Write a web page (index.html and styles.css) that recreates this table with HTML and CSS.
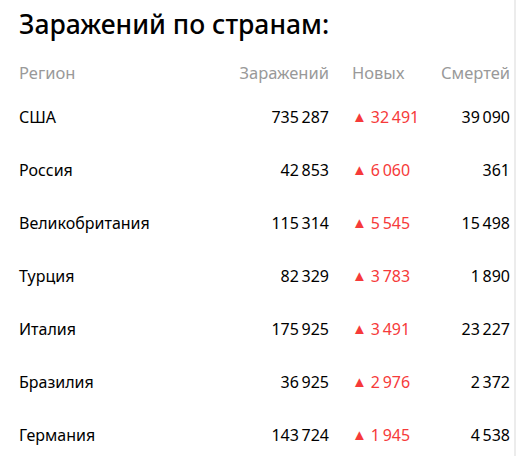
FILE: index.html
```html
<!DOCTYPE html>
<html lang="ru">
<head>
    <meta charset="UTF-8">
    <title>Заражений по странам</title>
    <link rel="stylesheet" href="styles.css">
</head>
<body>
    <div class="panel">
        <h1>Заражений по странам:</h1>
        <div class="table">
            <div class="row head">
                <div>Регион</div>
                <div class="num">Заражений</div>
                <div class="new">Новых</div>
                <div class="num">Смертей</div>
            </div>
            <div class="row">
                <div>США</div>
                <div class="num">735&#8201;287</div>
                <div class="new"><span class="up">&#9650;</span>32&#8201;491</div>
                <div class="num">39&#8201;090</div>
            </div>
            <div class="row">
                <div>Россия</div>
                <div class="num">42&#8201;853</div>
                <div class="new"><span class="up">&#9650;</span>6&#8201;060</div>
                <div class="num">361</div>
            </div>
            <div class="row">
                <div>Великобритания</div>
                <div class="num">115&#8201;314</div>
                <div class="new"><span class="up">&#9650;</span>5&#8201;545</div>
                <div class="num">15&#8201;498</div>
            </div>
            <div class="row">
                <div>Турция</div>
                <div class="num">82&#8201;329</div>
                <div class="new"><span class="up">&#9650;</span>3&#8201;783</div>
                <div class="num">1&#8201;890</div>
            </div>
            <div class="row">
                <div>Италия</div>
                <div class="num">175&#8201;925</div>
                <div class="new"><span class="up">&#9650;</span>3&#8201;491</div>
                <div class="num">23&#8201;227</div>
            </div>
            <div class="row">
                <div>Бразилия</div>
                <div class="num">36&#8201;925</div>
                <div class="new"><span class="up">&#9650;</span>2&#8201;976</div>
                <div class="num">2&#8201;372</div>
            </div>
            <div class="row">
                <div>Германия</div>
                <div class="num">143&#8201;724</div>
                <div class="new"><span class="up">&#9650;</span>1&#8201;945</div>
                <div class="num">4&#8201;538</div>
            </div>
        </div>
    </div>
</body>
</html>
```

FILE: styles.css
```css
body {
    margin: 0;
    background: #fff;
    font-family: "Noto Sans", Arial, sans-serif;
    color: #000;
}
.panel {
    width: 516px;
    height: 456px;
    border-right: 2px solid #ececec;
    padding: 0 4px 0 19px;
    box-sizing: border-box;
    overflow: hidden;
}
h1 {
    margin: 0;
    padding-top: 6px;
    height: 54px;
    box-sizing: border-box;
    font-size: 26.5px;
    font-weight: 500;
    line-height: 36px;
}
.row {
    display: grid;
    grid-template-columns: 200px 110px 101px 1fr;
    align-items: center;
    height: 53px;
    font-size: 16px;
}
.row.head {
    height: 36px;
    color: #999;
    font-size: 16.5px;
}
.num {
    text-align: right;
}
.new {
    padding-left: 23px;
    color: #f63a3a;
}
.head .new {
    color: #999;
}
.up {
    font-size: 15px;
    margin-right: 4px;
    position: relative;
    top: -1px;
}
```
